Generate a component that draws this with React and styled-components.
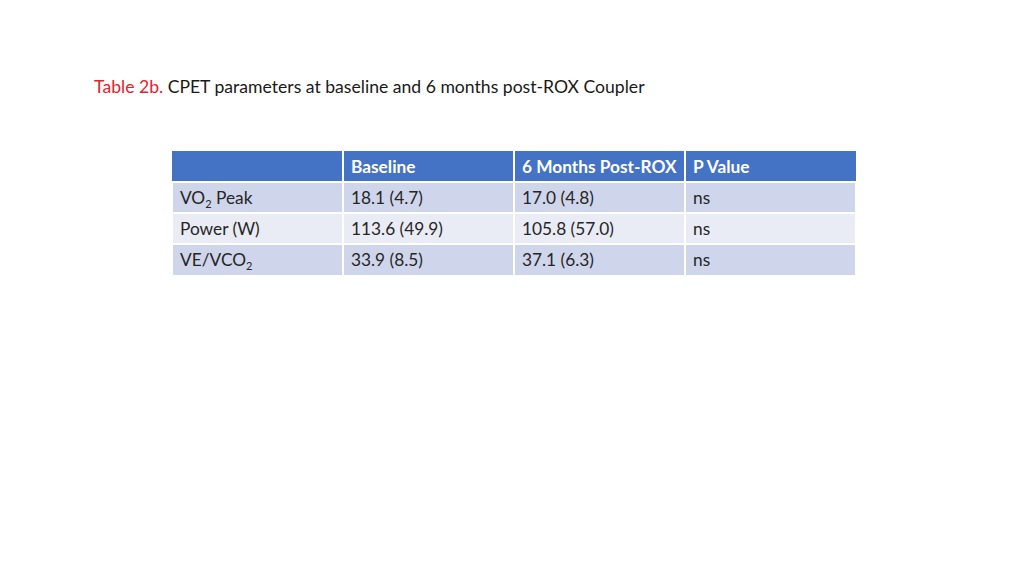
import React from "react";
import styled, { createGlobalStyle } from "styled-components";

const Global = createGlobalStyle`
  html, body {
    margin: 0;
    padding: 0;
    background: #ffffff;
  }
  body {
    font-family: "Lato", "Open Sans", sans-serif;
    color: #262626;
  }
`;

const Page = styled.div`
  width: 1024px;
  height: 576px;
  box-sizing: border-box;
  padding: 76px 0 0 94px;
`;

const Title = styled.h1`
  margin: 0;
  font-size: 17.6px;
  font-weight: 400;
  line-height: 22px;
  color: #1a1a1a;
`;

const Label = styled.span`
  color: #e8202a;
`;

const Table = styled.table`
  margin: 53px 0 0 77px;
  border-collapse: collapse;
  font-size: 17.3px;
`;

const HeadCell = styled.th`
  width: 171px;
  height: 31px;
  box-sizing: border-box;
  padding: 0 7px;
  text-align: left;
  font-weight: 700;
  color: #ffffff;
  background: #4472c4;
  border: 2px solid #ffffff;
  border-top: none;
  border-bottom-width: 2px;
`;

const Cell = styled.td`
  height: 31px;
  box-sizing: border-box;
  padding: 0 7px;
  text-align: left;
  background: ${(p) => (p.$shade ? "#cfd5ea" : "#e9ebf5")};
  border: 2px solid #ffffff;
  border-bottom-width: 1px;
`;

const CellText = styled.span`
  sub {
    font-size: 11px;
    vertical-align: -4px;
    line-height: 0;
  }
`;

const rows = [
  [<>VO<sub>2</sub> Peak</>, "18.1 (4.7)", "17.0 (4.8)", "ns"],
  ["Power (W)", "113.6 (49.9)", "105.8 (57.0)", "ns"],
  [<>VE/VCO<sub>2</sub></>, "33.9 (8.5)", "37.1 (6.3)", "ns"],
];

export default function App() {
  return (
    <Page>
      <Global />
      <Title>
        <Label>Table 2b.</Label> CPET parameters at baseline and 6 months post-ROX Coupler
      </Title>
      <Table>
        <thead>
          <tr>
            <HeadCell style={{ borderLeft: "none" }}></HeadCell>
            <HeadCell>Baseline</HeadCell>
            <HeadCell>6 Months Post-ROX</HeadCell>
            <HeadCell style={{ borderRight: "none" }}>P Value</HeadCell>
          </tr>
        </thead>
        <tbody>
          {rows.map((r, i) => (
            <tr key={i}>
              {r.map((c, j) => (
                <Cell key={j} $shade={i % 2 === 0}>
                  <CellText>{c}</CellText>
                </Cell>
              ))}
            </tr>
          ))}
        </tbody>
      </Table>
    </Page>
  );
}
